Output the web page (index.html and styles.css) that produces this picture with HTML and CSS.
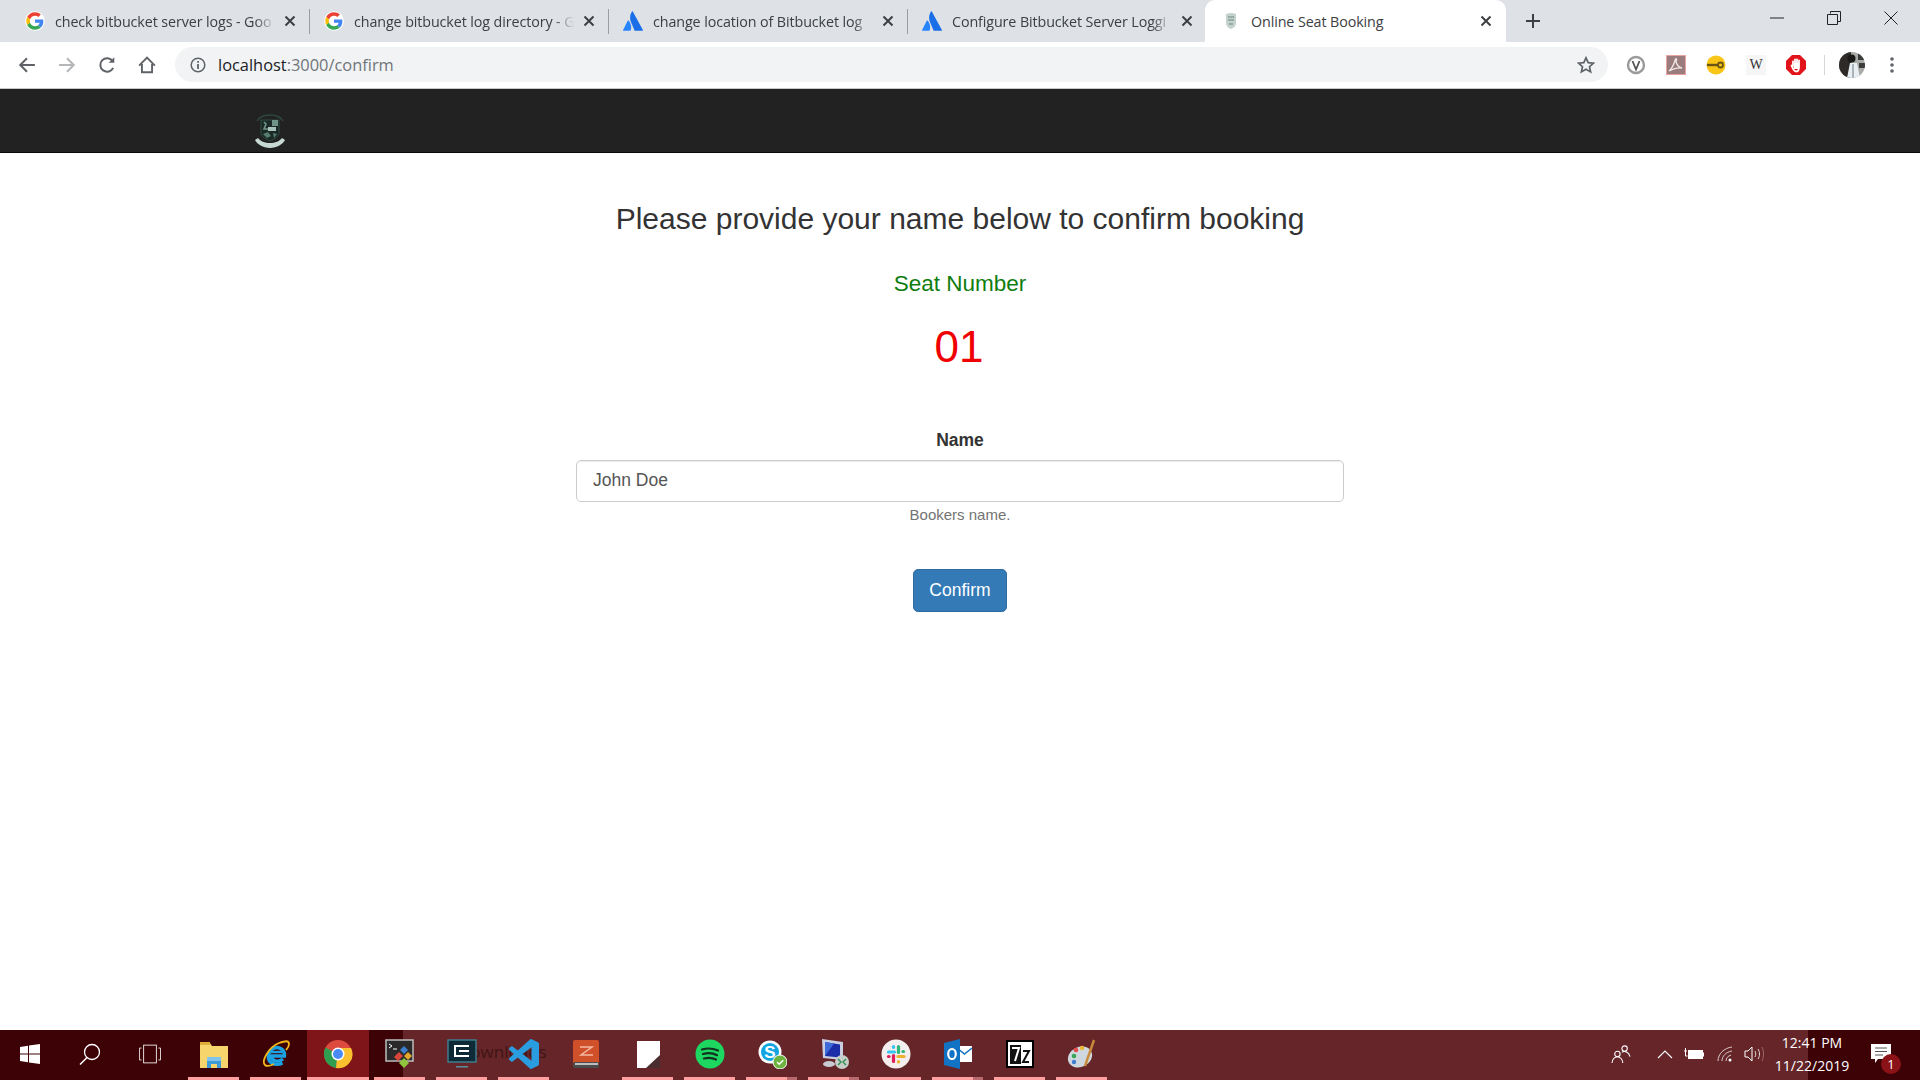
FILE: index.html
```html
<!DOCTYPE html>
<html lang="en">
<head>
<meta charset="utf-8">
<title>Online Seat Booking</title>
<link rel="stylesheet" href="styles.css">
</head>
<body>
<svg class="defs" xmlns="http://www.w3.org/2000/svg">
  <symbol id="g" viewBox="-3.500 -3.500 55 55">
    <circle cx="24" cy="24" r="27" fill="#fff"/>
    <path fill="#EA4335" d="M24 9.5c3.54 0 6.71 1.22 9.21 3.6l6.85-6.85C35.9 2.38 30.47 0 24 0 14.62 0 6.51 5.38 2.56 13.22l7.98 6.19C12.43 13.72 17.74 9.5 24 9.5z"/>
    <path fill="#4285F4" d="M46.98 24.55c0-1.57-.15-3.09-.38-4.55H24v9.02h12.94c-.58 2.96-2.26 5.48-4.78 7.18l7.73 6c4.51-4.18 7.09-10.36 7.09-17.65z"/>
    <path fill="#FBBC05" d="M10.53 28.59c-.48-1.45-.76-2.99-.76-4.59s.27-3.14.76-4.59l-7.98-6.19C.92 16.46 0 20.12 0 24c0 3.88.92 7.54 2.56 10.78l7.97-6.19z"/>
    <path fill="#34A853" d="M24 48c6.48 0 11.93-2.13 15.89-5.81l-7.73-6c-2.15 1.45-4.92 2.3-8.16 2.3-6.26 0-11.57-4.22-13.47-9.91l-7.98 6.19C6.51 42.62 14.62 48 24 48z"/>
  </symbol>
  <symbol id="atl" viewBox="0 0 20 20">
    <path fill="#2684ff" d="M5.6 9.6c-.3-.3-.7-.3-.9.1L.1 18.9c-.2.4.1.9.5.9h6.4c.2 0 .4-.1.5-.3 1.4-2.9.6-7.2-1.9-9.9z"/>
    <path fill="#1a6fe8" d="M9 .6C6.500 4.500 6.700 8.800 8.400 12l3.100 7.500c.1.200.300.300.500.300h7.400c.4 0 .7-.5.500-.9L9.800.6C9.600.2 9.200.2 9 .6z"/>
  </symbol>
  <symbol id="x" viewBox="0 0 16 16">
    <path d="M3.500 3.500l9 9M12.500 3.500l-9 9" fill="none" stroke="#3c4043" stroke-width="2"/>
  </symbol>
</svg>

<header class="tabstrip">
  <div class="tab">
    <svg class="favicon"><use href="#g"/></svg>
    <span class="tab-title">check bitbucket server logs - Goo</span>
    <svg class="tab-close"><use href="#x"/></svg>
  </div>
  <div class="tab">
    <svg class="favicon"><use href="#g"/></svg>
    <span class="tab-title">change bitbucket log directory - G</span>
    <svg class="tab-close"><use href="#x"/></svg>
  </div>
  <div class="tab">
    <svg class="favicon"><use href="#atl"/></svg>
    <span class="tab-title">change location of Bitbucket log</span>
    <svg class="tab-close"><use href="#x"/></svg>
  </div>
  <div class="tab tab-last">
    <svg class="favicon"><use href="#atl"/></svg>
    <span class="tab-title">Configure Bitbucket Server Loggi</span>
    <svg class="tab-close"><use href="#x"/></svg>
  </div>
  <div class="tab tab-active">
    <svg class="favicon" viewBox="0 0 20 20">
      <path d="M5 3c3-1.500 7-1.500 10 0v9c0 3-2 5-5 6-3-1-5-3-5-6z" fill="#c3d2cc"/>
      <path d="M7 6h6M7 9h6M8 13h4" stroke="#8aa398" stroke-width="1.500"/>
    </svg>
    <span class="tab-title tab-title-full">Online Seat Booking</span>
    <svg class="tab-close"><use href="#x"/></svg>
  </div>
  <svg class="newtab" viewBox="0 0 16 16"><path d="M8 1v14M1 8h14" stroke="#3c4043" stroke-width="2"/></svg>
  <div class="winctl">
    <div class="winbtn"><svg viewBox="0 0 14 14"><path d="M0 7h14" stroke="#222" stroke-width="1"/></svg></div>
    <div class="winbtn"><svg viewBox="0 0 14 14"><path d="M3.500 2.500V.5h10v10h-3M.5 3.500h10v10H.5z" fill="none" stroke="#222"/></svg></div>
    <div class="winbtn"><svg viewBox="0 0 14 14"><path d="M.5.5l13 13M13.500.5l-13 13" stroke="#222" stroke-width="1"/></svg></div>
  </div>
</header>

<nav class="toolbar">
  <div class="tbtn"><svg viewBox="0 0 16 16"><path d="M15 8H2M8 2L2 8l6 6" fill="none" stroke="#5f6368" stroke-width="1.800"/></svg></div>
  <div class="tbtn"><svg viewBox="0 0 16 16"><path d="M1 8h13M8 2l6 6-6 6" fill="none" stroke="#b4b6b9" stroke-width="1.800"/></svg></div>
  <div class="tbtn"><svg viewBox="0 0 16 16"><path d="M13.500 10.500A6 6 0 1 1 13 4.500" fill="none" stroke="#5f6368" stroke-width="1.800"/><path d="M14.500 1v5h-5z" fill="#5f6368"/></svg></div>
  <div class="tbtn"><svg viewBox="0 0 16 16"><path d="M1 8.500L8 1.500l7 7M3.500 7v7.500h9V7" fill="none" stroke="#5f6368" stroke-width="1.700"/></svg></div>
  <div class="omnibox">
    <svg class="omni-info" viewBox="0 0 16 16"><circle cx="8" cy="8" r="6.800" fill="none" stroke="#5f6368" stroke-width="1.500"/><path d="M8 7v5M8 4v1.800" stroke="#5f6368" stroke-width="1.800"/></svg>
    <span class="url"><span class="url-host">localhost</span>:3000/confirm</span>
    <svg class="omni-star" viewBox="0 0 18 18"><path d="M9 1.800l2.200 4.800 5.200.6-3.900 3.500 1.100 5.200L9 13.300l-4.600 2.600 1.100-5.200L1.600 7.200l5.200-.6z" fill="none" stroke="#5f6368" stroke-width="1.700"/></svg>
  </div>
  <div class="tbtn">
    <svg class="ext" viewBox="0 0 20 20"><circle cx="10" cy="10" r="8" fill="none" stroke="#9a9a9a" stroke-width="2.400"/><path d="M6.500 6l3.500 8.500L13.500 6" fill="none" stroke="#555" stroke-width="1.800"/></svg>
  </div>
  <div class="tbtn">
    <svg class="ext" viewBox="0 0 20 20"><rect width="20" height="20" fill="#9a7c7c"/><rect x=".5" y=".5" width="19" height="19" fill="none" stroke="#e8a3a3"/><path d="M3 16c3-2 5-7 6.500-12 1-1.500 1.500 1 .5 3 1 4 3 5 6 6-3-.5-8 .5-13 3z" fill="none" stroke="#f1e6e6" stroke-width="1.300"/></svg>
  </div>
  <div class="tbtn">
    <svg class="ext" viewBox="0 0 20 20"><circle cx="10" cy="10" r="9.500" fill="#f9c516"/><path d="M1 10h12" stroke="#6b5514" stroke-width="2.400"/><circle cx="14.500" cy="10" r="2.500" fill="none" stroke="#6b5514" stroke-width="1.800"/></svg>
  </div>
  <div class="tbtn">
    <span class="ext-w">W</span>
  </div>
  <div class="tbtn">
    <svg class="ext" viewBox="0 0 20 20"><path d="M6 0h8l6 6v8l-6 6H6l-6-6V6z" fill="#e3131b"/><path d="M7 6.500V11M9 4.500V11M11 4.500V11M13 5.500V12M5.500 10.500l2 4c.8 1.500 2 2 3 2 2 0 2.500-2 2.500-5" fill="none" stroke="#fff" stroke-width="1.800" stroke-linecap="round"/><path d="M8 8h5v6H8z" fill="#fff"/></svg>
  </div>
  <div class="tool-divider"></div>
  <div class="tbtn tbtn-avatar">
    <svg class="avatar" viewBox="0 0 26 26"><clipPath id="av"><circle cx="13" cy="13" r="13"/></clipPath><g clip-path="url(#av)"><rect width="26" height="26" fill="#a8aaa8"/><rect width="12" height="26" fill="#2d2a28"/><path d="M19 0h7v8h-7zM20 11h6v5h-6z" fill="#3c3c3a"/><path d="M8 26l3-15h7l3 15z" fill="#e8eef2"/><path d="M14 12v14" stroke="#6c7a84"/><circle cx="12.500" cy="6.500" r="4" fill="#1c1a18"/></g></svg>
  </div>
  <div class="tbtn"><svg class="dots" viewBox="0 0 4 16"><circle cx="2" cy="2" r="1.800" fill="#5f6368"/><circle cx="2" cy="8" r="1.800" fill="#5f6368"/><circle cx="2" cy="14" r="1.800" fill="#5f6368"/></svg></div>
</nav>

<div class="navbar">
  <svg class="crest" viewBox="0 0 34 36">
    <path d="M4 9C9 1 25 1 30 9" fill="none" stroke="#2f4a42" stroke-width="1.300"/>
    <path d="M8 8h18v13c0 3-4 6-9 8-5-2-9-5-9-8z" fill="#1b2a26" stroke="#2f4a42" stroke-width="1"/>
    <path d="M19 8h6v6h-6z" fill="#6f9488"/>
    <path d="M11 10l2 2-2 5h4" fill="none" stroke="#6f9488" stroke-width="1.600"/>
    <path d="M15 15h8v4h-8z" fill="#a8c4ba"/>
    <path d="M10 22l5-2 3 4-4 2zM20 21l4 1-3 4z" fill="#557d70"/>
    <path d="M2 28c2 4 8 8 15 8s13-4 15-8l-3-2c-2 3-7 5-12 5S7 29 5 26z" fill="#c6dad3"/>
  </svg>
</div>

<main class="page">
  <div class="panel">
    <h1 class="title">Please provide your name below to confirm booking</h1>
    <h2 class="seat-label">Seat Number</h2>
    <div class="seat-no">01</div>
    <label class="field-label" for="name">Name</label>
    <input class="field" id="name" type="text" placeholder="John Doe">
    <p class="help">Bookers name.</p>
    <button class="confirm" type="button">Confirm</button>
  </div>
</main>

<footer class="taskbar">
  <span class="ghost">Downloads</span>
  <div class="sys"><svg class="ico-win" viewBox="0 0 20 20"><path d="M0 3l8-1.200V9.500H0zM9 1.600L20 0v9.500H9zM0 10.500h8v7.700L0 17zM9 10.500h11V20L9 18.400z" fill="#fff"/></svg></div>
  <div class="sys"><svg class="ico-sys" viewBox="0 0 22 22"><circle cx="13" cy="9" r="7.500" fill="none" stroke="#fff" stroke-width="1.300"/><path d="M8 14.500L1 21.500" stroke="#fff" stroke-width="1.500"/></svg></div>
  <div class="sys"><svg class="ico-sys" viewBox="0 0 26 22"><rect x="5.500" y=".5" width="15" height="21" fill="none" stroke="#fff"/><path d="M3 4H.5v14H3M23 4h2.500v14H23" fill="none" stroke="#fff"/></svg></div>

  <div class="app lit"><svg viewBox="0 0 30 30"><path d="M1 4h10l2 3h16v22H1z" fill="#f6d56d"/><rect x="1" y="3" width="10" height="3" fill="#e0ad3a"/><path d="M8 29v-8h14v8h-4v-4h-6v4z" fill="#3d9bd6"/><rect x="8" y="18" width="14" height="4" fill="#7fc4ec"/></svg></div>
  <div class="app lit"><svg viewBox="0 0 30 30"><path d="M25 17H10c.5 5 7 7 12 3" fill="none" stroke="#1ba1e2" stroke-width="3.500"/><path d="M23.500 17C24 9 15 6 10 11c-3 3-3.500 8-1.500 11 3 4 9 4 13 2" fill="none" stroke="#1ba1e2" stroke-width="3.500"/><path d="M9 13h14" stroke="#1ba1e2" stroke-width="2.500"/><path d="M4 26C0 22 8 8 18 4c6-2 10-3 10 1 0 2-2 5-3 6M4 26c2 2 5 1 9-1" fill="none" stroke="#f2b619" stroke-width="1.800"/></svg></div>
  <div class="app lit active"><svg viewBox="0 0 30 30"><circle cx="15" cy="15" r="14" fill="#dd4b3e"/><path d="M15 15L2.500 8.500A14 14 0 0 0 13 28.900z" fill="#2f9e4f"/><path d="M15 9h13a14 14 0 0 1-15 20z" fill="#fbc02d"/><circle cx="15" cy="15" r="6.500" fill="#fff"/><circle cx="15" cy="15" r="5" fill="#4a8af4"/></svg></div>
  <div class="app lit"><svg viewBox="0 0 30 30"><rect x="1" y="1" width="27" height="21" fill="#2a2a2a" stroke="#bdbdbd" stroke-width="1.500"/><path d="M4 5l3 2-3 2M8 10h4" stroke="#fff" fill="none"/><path d="M9 18l5-5 4 4-5 5z" fill="#d8463a"/><path d="M15 11l4-4 4 4-4 4z" fill="#3f7fd0"/><path d="M19 17l4-4 4 4-4 4z" fill="#e3a72f"/><path d="M14 24l5-5 5 5-5 5z" fill="#8fc43c"/></svg></div>
  <div class="app lit"><svg viewBox="0 0 30 30"><rect x="1" y="1" width="28" height="22" fill="#0e2a36" stroke="#3f7c8c" stroke-width="1.500"/><path d="M22 7H8v10h14M12 12h10" fill="none" stroke="#fff" stroke-width="2"/><rect x="9" y="27" width="12" height="1.500" fill="#5b8e9c"/></svg></div>
  <div class="app lit"><svg viewBox="0 0 24 24"><path fill="#2a9de0" d="M23.150 2.587L18.210.21a1.494 1.494 0 0 0-1.705.29l-9.460 8.630-4.120-3.128a.999.999 0 0 0-1.276.057L.327 7.261A1 1 0 0 0 .326 8.740L3.899 12 .326 15.260a1 1 0 0 0 .001 1.479L1.650 17.940a.999.999 0 0 0 1.276.057l4.120-3.128 9.460 8.630a1.492 1.492 0 0 0 1.704.29l4.942-2.377A1.500 1.500 0 0 0 24 20.060V3.939a1.500 1.500 0 0 0-.850-1.352zm-5.146 14.861L10.826 12l7.178-5.448v10.896z"/></svg></div>
  <div class="app"><svg viewBox="0 0 30 30"><rect x="2" y="1" width="26" height="24" rx="2" fill="#d0502a"/><path d="M9 8h12l-11 8h12" fill="none" stroke="#f4b9a4" stroke-width="1.500"/><rect x="2" y="23" width="26" height="6" rx="2" fill="#4b4b4b"/><rect x="4" y="24" width="23" height="2" fill="#bdbdbd"/></svg></div>
  <div class="app lit"><svg viewBox="0 0 30 30"><path d="M4 2h23v27H4z" fill="#fff"/><path d="M27 16v13H13z" fill="#4a2d2f"/></svg></div>
  <div class="app lit"><svg viewBox="0 0 30 30"><circle cx="15" cy="15" r="14.500" fill="#1ed760"/><path d="M7 10.500c5-1.500 11-1.200 16 1M8 15c4.500-1.200 10-1 14 1.200M9 19.500c4-1 8.500-.8 12 1" fill="none" stroke="#12311f" stroke-width="2.200" stroke-linecap="round"/></svg></div>
  <div class="app lit stack"><svg viewBox="0 0 30 30"><circle cx="13" cy="13" r="11.500" fill="#fff"/><circle cx="13" cy="13" r="9" fill="#12a5e2"/><text class="skype-s" x="13" y="19" text-anchor="middle">S</text><circle cx="23" cy="23" r="7" fill="#6cb33f" stroke="#fff" stroke-width="1"/><path d="M20 23l2.200 2.200 4-4" fill="none" stroke="#fff" stroke-width="1.500"/></svg></div>
  <div class="app lit stack"><svg viewBox="0 0 30 30"><path d="M3 0l21 3v18L4 19z" fill="#c9cfe0"/><path d="M6 3l15 2.500v13L6 17z" fill="#1b2ea8"/><path d="M6 3l9 1.500L6 17z" fill="#3f6bd8"/><ellipse cx="10" cy="25" rx="6" ry="3" fill="#c8ccd2"/><circle cx="23" cy="23" r="7" fill="#c7cdc9"/><path d="M19 20l3 3-3 3M27 20l-3 3 3 3" fill="none" stroke="#2c8f50" stroke-width="1.400"/></svg></div>
  <div class="app lit"><svg viewBox="0 0 30 30"><circle cx="15" cy="15" r="14.500" fill="#f4efee"/><path d="M7.500 13h6" stroke="#36c5f0" stroke-width="3.200" stroke-linecap="round"/><path d="M12.500 7.500v1" stroke="#36c5f0" stroke-width="3.200" stroke-linecap="round"/><path d="M17.500 7.500v6" stroke="#2eb67d" stroke-width="3.200" stroke-linecap="round"/><path d="M22 12.500h.5" stroke="#2eb67d" stroke-width="3.200" stroke-linecap="round"/><path d="M17 17.500h6" stroke="#ecb22e" stroke-width="3.200" stroke-linecap="round"/><path d="M17.500 22.500v.5" stroke="#ecb22e" stroke-width="3.200" stroke-linecap="round"/><path d="M12.500 16.500v6" stroke="#e01e5a" stroke-width="3.200" stroke-linecap="round"/><path d="M7.500 17.500h.5" stroke="#e01e5a" stroke-width="3.200" stroke-linecap="round"/></svg></div>
  <div class="app lit stack"><svg viewBox="0 0 30 30"><rect x="14" y="7" width="15" height="16" fill="#fff"/><path d="M14 9l7.500 6L29 9" fill="none" stroke="#1273c4" stroke-width="1.600"/><path d="M1 4l16-4v30L1 26z" fill="#1273c4"/><ellipse cx="9" cy="15" rx="3.800" ry="5" fill="none" stroke="#fff" stroke-width="2.200"/></svg></div>
  <div class="app lit"><svg viewBox="0 0 30 30"><rect x="1" y="1" width="28" height="28" fill="#000"/><rect x="3" y="3" width="24" height="24" fill="#fff"/><rect x="5" y="6" width="11" height="19" fill="#111"/><path d="M7 9h7l-4 13" fill="none" stroke="#fff" stroke-width="2"/><path d="M18 12h6l-6 11h6" fill="none" stroke="#111" stroke-width="2"/></svg></div>
  <div class="app lit"><svg viewBox="0 0 30 30"><ellipse cx="13" cy="18" rx="12.500" ry="10" transform="rotate(-25 13 18)" fill="#cfd8de"/><circle cx="7" cy="17" r="2.300" fill="#3aa655"/><circle cx="9" cy="11" r="2.300" fill="#e54b4b"/><circle cx="15" cy="9" r="2.300" fill="#e9b83a"/><circle cx="7" cy="23" r="2.200" fill="#3f7fd0"/><path d="M27 1l-9 26" stroke="#c98b3b" stroke-width="2.400"/></svg></div>

  <div class="tray">
    <svg class="tray-people" viewBox="0 0 22 20"><circle cx="7" cy="10" r="3" fill="none" stroke="#fff" stroke-width="1.200"/><path d="M1 20c0-4 3-7 6-7s6 3 6 7" fill="none" stroke="#fff" stroke-width="1.200"/><circle cx="15" cy="4" r="3" fill="none" stroke="#fff" stroke-width="1.200"/><path d="M12 8c3-2 8 0 9 5" fill="none" stroke="#fff" stroke-width="1.200"/></svg>
    <svg class="tray-chev" viewBox="0 0 16 10"><path d="M1 9l7-7 7 7" fill="none" stroke="#fff" stroke-width="1.100"/></svg>
    <svg class="tray-batt" viewBox="0 0 20 12"><path d="M0 3h3M1.500 0v3M1.500 3v5h2" fill="none" stroke="#fff"/><rect x="4.500" y="2.500" width="14" height="8" fill="#fff" stroke="#fff"/><rect x="19" y="4.500" width="1" height="4" fill="#fff"/></svg>
    <svg class="tray-wifi" viewBox="0 0 16 16"><path d="M1 15C1 8 7 2 15 1M5 15c0-5 4-9 10-10M9 15c0-3 2-5 5-6" fill="none" stroke="#d8c8c8" stroke-width="1"/><circle cx="13" cy="14" r="1.500" fill="#fff"/></svg>
    <svg class="tray-vol" viewBox="0 0 20 16"><path d="M1 5h3l4-4v14l-4-4H1z" fill="none" stroke="#fff"/><path d="M11 5c1 2 1 4 0 6M14 3c2 3 2 7 0 10" fill="none" stroke="#e8d8d8"/><path d="M18 1c2 4 2 10 0 14" fill="none" stroke="#9a6a6a"/></svg>
    <div class="clock"><span>12:41 PM</span><span>11/22/2019</span></div>
    <div class="notif">
      <svg class="notif-ico" viewBox="0 0 20 20"><path d="M0 0h20v15H7l-3 4v-4H0z" fill="#fff"/><path d="M4 4h12M4 7.500h12M4 11h8" stroke="#555" stroke-width="1"/></svg>
      <span class="badge">1</span>
    </div>
  </div>
</footer>
</body>
</html>
```

FILE: styles.css
```css
* { box-sizing: border-box; }
html, body { margin: 0; height: 100%; }
body {
  height: 1080px;
  display: flex;
  flex-direction: column;
  overflow: hidden;
  background: #fff;
  font-family: "Liberation Sans", Arial, sans-serif;
  color: #333;
}
.defs { display: none; }

/* tab strip */
.tabstrip {
  height: 42px;
  flex: none;
  display: flex;
  align-items: stretch;
  padding-left: 11px;
  background: #dee1e6;
  font-family: "Open Sans", "Noto Sans", sans-serif;
}
.tab {
  position: relative;
  width: 299px;
  flex: none;
  display: flex;
  align-items: center;
  padding: 0 12px 0 14px;
  color: #3c4043;
  font-size: 14.300px;
  letter-spacing: -.1px;
}
.tab::after {
  content: "";
  position: absolute;
  right: 0;
  top: 9px;
  width: 1px;
  height: 25px;
  background: #9b9ea3;
}
.tab-last::after, .tab-active::after { display: none; }
.tab-active {
  margin-left: -2px;
  width: 301px;
  padding-left: 16px;
  background: #fff;
  border-radius: 10px 10px 0 0;
}
.favicon { width: 20px; height: 20px; flex: none; margin-right: 10px; }
.tab-title {
  flex: 1;
  min-width: 0;
  margin-right: 6px;
  white-space: nowrap;
  overflow: hidden;
  -webkit-mask-image: linear-gradient(to right, #000 calc(100% - 20px), transparent);
  mask-image: linear-gradient(to right, #000 calc(100% - 20px), transparent);
}
.tab-title-full { -webkit-mask-image: none; mask-image: none; }
.tab-close { width: 16px; height: 16px; flex: none; margin-left: 1px; }
.newtab { width: 16px; height: 16px; flex: none; align-self: center; margin-left: 19px; }
.winctl { margin-left: auto; display: flex; padding-right: 1px; }
.winbtn { width: 57px; display: flex; justify-content: center; padding-top: 11px; }
.winbtn svg { width: 14px; height: 14px; }

/* toolbar */
.toolbar {
  height: 47px;
  flex: none;
  display: flex;
  align-items: center;
  padding: 0 8px 1px 7px;
  background: #fff;
  border-bottom: 1px solid #c8c8c8;
}
.tbtn { width: 40px; height: 36px; flex: none; display: flex; align-items: center; justify-content: center; }
.tbtn svg { width: 18px; height: 18px; }
.omnibox {
  flex: 1;
  height: 35px;
  margin: 0 8px;
  display: flex;
  align-items: center;
  padding: 0 13px 0 15px;
  background: #f1f3f4;
  border-radius: 18px;
}
.omni-info { width: 16px; height: 16px; flex: none; margin-right: 12px; }
.url {
  flex: 1;
  font: 16.400px "Open Sans", "Noto Sans", sans-serif;
  color: #70757a;
}
.url-host { color: #202124; }
.omni-star { width: 18px; height: 18px; flex: none; }
.tbtn .ext { width: 20px; height: 20px; }
.ext-w {
  width: 20px;
  height: 20px;
  display: flex;
  align-items: center;
  justify-content: center;
  background: #f6f6f6;
  font: 14px "Liberation Serif", serif;
  color: #333;
}
.tool-divider { width: 1px; height: 20px; flex: none; margin: 0 0 0 8px; background: #d4d6d8; }
.tbtn-avatar { margin-left: 7px; }
.tbtn .avatar { width: 26px; height: 26px; }
.tbtn .dots { width: 4px; height: 16px; }

/* page navbar */
.navbar {
  height: 64px;
  flex: none;
  padding: 23px 0 0 253px;
  background: #222;
  border-bottom: 1px solid #080808;
}
.crest { display: block; width: 34px; height: 36px; }

/* page content */
.page { flex: 1; min-height: 0; }
.panel {
  width: 768px;
  margin: 0 auto;
  padding-top: 49px;
  display: flex;
  flex-direction: column;
  align-items: center;
  text-align: center;
}
.title { margin: 0; font-size: 30px; line-height: 33px; font-weight: 400; color: #333; }
.seat-label { margin: 36px 0 0; font-size: 22.500px; line-height: 26px; font-weight: 400; color: #0f7d0f; }
.seat-no { margin-top: 27px; padding-right: 2px; font-size: 44px; line-height: 46px; color: #f00000; }
.field-label { margin-top: 58px; font-size: 17.500px; line-height: 25px; font-weight: 700; color: #333; }
.field {
  width: 100%;
  height: 42px;
  margin-top: 7px;
  padding: 0 16px 2px;
  border: 1px solid #ccc;
  border-radius: 5px;
  box-shadow: inset 0 1px 1px rgba(0,0,0,.075);
  font: 17.500px "Liberation Sans", Arial, sans-serif;
  color: #555;
}
.field::placeholder { color: #555; opacity: 1; }
.help { margin: 3px 0 0; font-size: 15px; line-height: 20px; color: #737373; }
.confirm {
  width: 94px;
  height: 43px;
  margin-top: 44px;
  border: 1px solid #2e6da4;
  border-radius: 5px;
  background: #337ab7;
  color: #fff;
  font: 17.500px "Liberation Sans", Arial, sans-serif;
}

/* taskbar */
.taskbar {
  position: relative;
  height: 50px;
  flex: none;
  display: flex;
  align-items: center;
  padding-bottom: 2px;
  background: linear-gradient(to right, #3d0205 403px, #662629 403px, #662629 1808px, #3d0205 1808px);
  font-family: "Open Sans", "Noto Sans", sans-serif;
  color: #fff;
}
.ghost {
  position: absolute;
  left: 458px;
  top: 10px;
  font-size: 17px;
  color: #3f1416;
}
.sys { width: 60px; flex: none; display: flex; justify-content: center; position: relative; }
.ico-win { width: 20px; height: 20px; }
.ico-sys { width: 22px; height: 22px; }
.app {
  position: relative;
  width: 62px;
  height: 50px;
  margin-bottom: -2px;
  flex: none;
  display: flex;
  align-items: center;
  justify-content: center;
  padding-bottom: 2px;
}
.sys + .app { margin-left: 2.500px; }
.app svg { width: 30px; height: 30px; position: relative; }
.active { background: #7f1518; }
.lit::after {
  content: "";
  position: absolute;
  left: 5px;
  right: 6px;
  bottom: 0;
  height: 3px;
  background: #ff9f9f;
}
.active::after { left: 0; right: 0; }
.stack::before {
  content: "";
  position: absolute;
  right: 6px;
  bottom: 0;
  width: 10px;
  height: 3px;
  background: #b96a6e;
  z-index: 1;
}
.skype-s { font: 700 17px "Liberation Sans", Arial, sans-serif; fill: #fff; }

.tray { margin-left: auto; display: flex; align-items: center; height: 48px; position: relative; }
.tray-people { width: 20px; height: 18px; margin-right: 26px; }
.tray-chev { width: 16px; height: 10px; margin-right: 11px; }
.tray-batt { width: 20px; height: 12px; margin-right: 13px; }
.tray-wifi { width: 16px; height: 16px; margin-right: 11px; }
.tray-vol { width: 20px; height: 16px; margin-right: 4px; }
.clock {
  width: 88px;
  display: flex;
  flex-direction: column;
  align-items: center;
  font-size: 14px;
  line-height: 23px;
}
.notif { position: relative; width: 64px; height: 48px; display: flex; align-items: center; padding-left: 15px; }
.notif-ico { width: 20px; height: 20px; }
.badge {
  position: absolute;
  left: 25px;
  top: 24px;
  width: 20px;
  height: 20px;
  display: flex;
  align-items: center;
  justify-content: center;
  border-radius: 50%;
  background: #8b1216;
  font-size: 13px;
}
```
